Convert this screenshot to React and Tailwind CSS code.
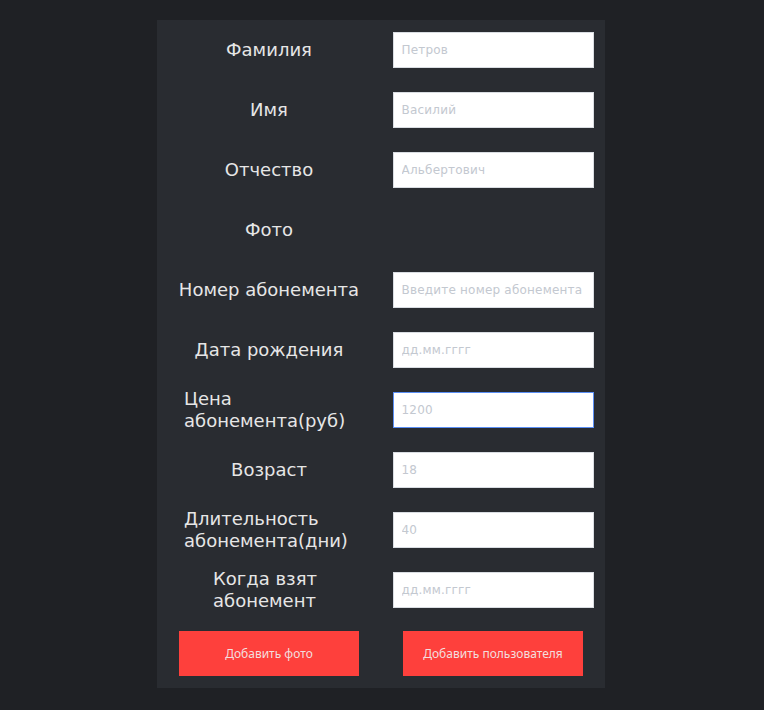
import React from 'react';

// Поля формы регистрации
const fields = [
  { label: 'Фамилия', placeholder: 'Петров' },
  { label: 'Имя', placeholder: 'Василий' },
  { label: 'Отчество', placeholder: 'Альбертович' },
  { label: 'Фото', none: true },
  { label: 'Номер абонемента', placeholder: 'Введите номер абонемента' },
  { label: 'Дата рождения', placeholder: 'дд.мм.гггг' },
  { label: 'Цена абонемента(руб)', placeholder: '1200', box: 'w-[170px] text-left', focus: true },
  { label: 'Возраст', placeholder: '18' },
  { label: 'Длительность абонемента(дни)', placeholder: '40', box: 'w-[170px] text-left' },
  { label: 'Когда взят абонемент', placeholder: 'дд.мм.гггг', box: 'w-[112px] text-left' },
];

const App = () => {
  return (
    <div
      className="min-h-[710px] w-full bg-[#1f2125] pt-5"
      style={{ fontFamily: '"DejaVu Sans", Verdana, sans-serif' }}
    >
      <div className="w-[762px]">
        <div className="mx-auto w-[448px] bg-[#292c31] pb-3">
          {fields.map((f) => (
            <div key={f.label} className="grid h-[60px] grid-cols-2 items-center">
              <div className="flex justify-center">
                <span
                  className={`inline-block text-[18px] leading-[22px] text-[#e6e6e6] ${
                    f.box || 'text-center'
                  }`}
                >
                  {f.label}
                </span>
              </div>
              <div className="flex justify-center">
                {!f.none && (
                  <input
                    placeholder={f.placeholder}
                    className={`h-[36px] w-[201px] bg-white px-[8px] text-[12px] tracking-[0.2px] outline-none placeholder:text-[#c3c8d0] ${
                      f.focus ? 'border border-[#5b8ff5]' : 'border border-[#d9dde2]'
                    }`}
                  />
                )}
              </div>
            </div>
          ))}
          <div
            className="mt-[11px] grid grid-cols-2"
            style={{ fontFamily: '"Noto Sans", sans-serif' }}
          >
            <div className="flex justify-center">
              <button className="h-[45px] w-[180px] bg-[#fe403c] text-[12px] text-[#f3dede]">
                Добавить фото
              </button>
            </div>
            <div className="flex justify-center">
              <button className="h-[45px] w-[180px] bg-[#fe403c] text-[12px] text-[#f3dede]">
                Добавить пользователя
              </button>
            </div>
          </div>
        </div>
      </div>
    </div>
  );
};

export default App;
